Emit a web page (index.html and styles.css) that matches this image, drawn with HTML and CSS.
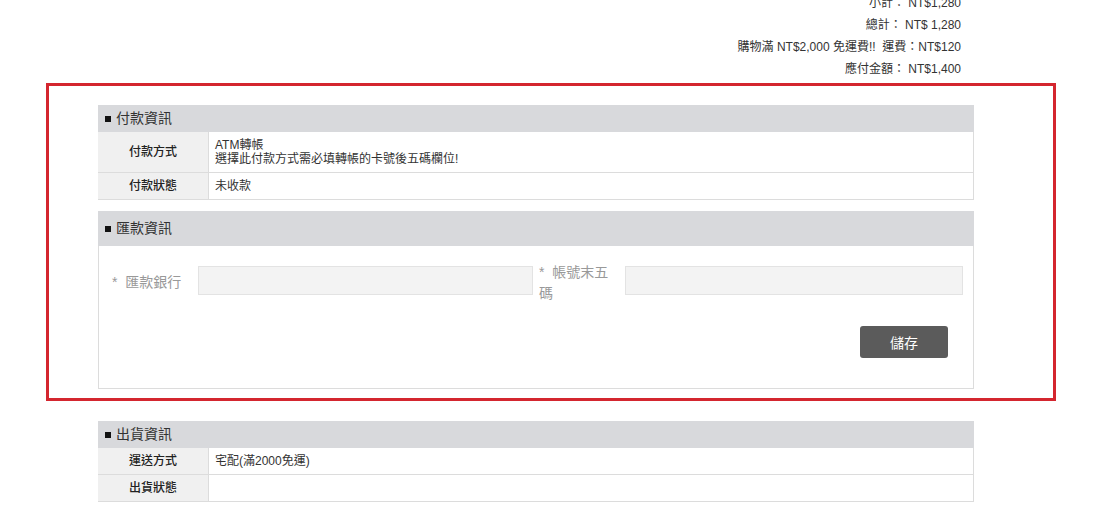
FILE: index.html
```html
<!DOCTYPE html>
<html lang="zh-Hant">
<head>
<meta charset="utf-8">
<title>訂單</title>
<link rel="stylesheet" href="styles.css">
</head>
<body>
<div class="page">
  <div class="summary">
    <div class="sum-line">小計： NT$1,280</div>
    <div class="sum-line">總計： NT$ 1,280</div>
    <div class="sum-line">購物滿 NT$2,000 免運費!!&nbsp; 運費：NT$120</div>
    <div class="sum-line">應付金額： NT$1,400</div>
  </div>

  <div class="highlight">
    <section class="block">
      <div class="block-head"><span class="sq"></span>付款資訊</div>
      <div class="info">
        <div class="info-row">
          <div class="info-label">付款方式</div>
          <div class="info-value">ATM轉帳<br>選擇此付款方式需必填轉帳的卡號後五碼欄位!</div>
        </div>
        <div class="info-row">
          <div class="info-label">付款狀態</div>
          <div class="info-value">未收款</div>
        </div>
      </div>
    </section>

    <section class="panel">
      <div class="block-head tall"><span class="sq"></span>匯款資訊</div>
      <div class="form-row">
        <label class="f-label f-label-1">*&nbsp; 匯款銀行</label>
        <div class="f-input"></div>
        <label class="f-label f-label-2">*&nbsp; 帳號末五碼</label>
        <div class="f-input"></div>
      </div>
      <div class="actions">
        <button class="btn-save" type="button">儲存</button>
      </div>
    </section>
  </div>

  <section class="block ship">
    <div class="block-head"><span class="sq"></span>出貨資訊</div>
    <div class="info">
      <div class="info-row">
        <div class="info-label">運送方式</div>
        <div class="info-value">宅配(滿2000免運)</div>
      </div>
      <div class="info-row">
        <div class="info-label">出貨狀態</div>
        <div class="info-value"></div>
      </div>
    </div>
  </section>
</div>
</body>
</html>
```

FILE: styles.css
```css
* { box-sizing: border-box; }

html, body {
  margin: 0;
  padding: 0;
  background: #ffffff;
}

body {
  font-family: "Liberation Sans", "Noto Sans CJK TC", sans-serif;
  font-size: 12px;
  color: #333333;
  overflow: hidden;
}

.page {
  width: 1107px;
  padding-left: 46px;
}

.summary {
  width: 1010px;
  margin-top: -8px;
  padding-left: 52px;
  margin-bottom: 3px;
}

.sum-line {
  width: 863px;
  text-align: right;
  line-height: 22px;
  height: 22px;
  white-space: nowrap;
}

.highlight {
  width: 1010px;
  border: 3px solid #d4262f;
  padding: 19px 0 9px 49px;
}

.block,
.panel {
  width: 876px;
}

.block-head {
  background: #d8d9dc;
  height: 27px;
  line-height: 27px;
  font-size: 14px;
  padding-left: 7px;
  color: #333;
  display: flex;
  align-items: center;
}

.block-head.tall {
  height: 35px;
  line-height: 35px;
}

.sq {
  display: inline-block;
  width: 6px;
  height: 6px;
  background: #111;
  margin-right: 5px;
  margin-top: 1px;
}

.info {
  border-right: 1px solid #dcdcdc;
}

.info-row {
  display: grid;
  grid-template-columns: 111px 1fr;
  border-bottom: 1px solid #dcdcdc;
}

.info-label {
  background: #f0f0f0;
  border-right: 1px solid #dcdcdc;
  text-align: center;
  font-weight: 500;
  color: #222;
  line-height: 14px;
  padding: 6px 0;
  display: flex;
  align-items: center;
  justify-content: center;
}

.info-value {
  line-height: 14px;
  padding: 6px 6px;
  min-height: 26px;
}

.panel {
  margin-top: 11px;
  border: 1px solid #dcdcdc;
  border-top: none;
}

.panel .block-head {
  margin: 0 -1px;
}

.form-row {
  display: grid;
  grid-template-columns: 99px 335px 92px 338px;
  padding-top: 16px;
  align-items: start;
}

.f-label {
  font-size: 14px;
  line-height: 21px;
  color: #999999;
}

.f-label-1 {
  padding-left: 13px;
  padding-top: 10px;
}

.f-label-2 {
  padding-left: 6px;
  padding-right: 12px;
}

.f-input {
  margin-top: 4px;
  height: 29px;
  background: #f3f3f3;
  border: 1px solid #e3e3e3;
}

.actions {
  display: flex;
  justify-content: flex-end;
  padding: 22px 25px 30px 0;
}

.btn-save {
  width: 88px;
  height: 32px;
  background: #5b5b5b;
  color: #ffffff;
  border: none;
  border-radius: 3px;
  font-family: "Liberation Sans", "Noto Sans CJK TC", sans-serif;
  font-size: 14px;
  padding: 0;
}

.ship {
  margin-top: 20px;
  margin-left: 52px;
}
```
